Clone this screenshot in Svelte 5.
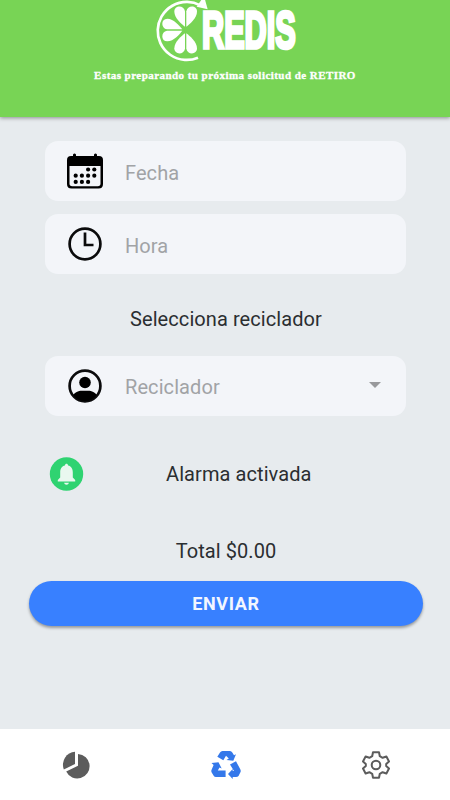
<script>
  let date = "";
  let time = "";
  let total = 0;

  // [column, row] of each day mark in the calendar icon
  const days = [[2, 0], [3, 0], [0, 1], [1, 1], [2, 1], [3, 1], [0, 2], [1, 2], [2, 2]];
  const petals = [0, -90, 180];
</script>

<div class="page">
  <header>
    <svg class="logo" viewBox="0 0 510 186" role="img" aria-label="Redis">
      <path class="ring" d="M174 173 A87 87 0 1 1 181 16" />
      <path d="M170 20 L203 28 L192 -12 Z" />
      {#each petals as angle}
        <g transform={`rotate(${angle} 137 90)`}>
          <path d="M135 80 C126 73 103 54 103 35 C103 15 132 15 135 34 Z" />
          <path d="M139 80 C148 73 171 54 171 35 C171 15 142 15 139 34 Z" />
        </g>
      {/each}
      <text x="186" y="145" textLength="281" lengthAdjust="spacingAndGlyphs">REDIS</text>
    </svg>
    <p>Estas preparando tu próxima solicitud de RETIRO</p>
  </header>

  <main>
    <label class="field">
      <svg viewBox="0 0 36 36">
        <path d="M4 3 H6 V1.5 Q7.5 -.5 9 1.5 V3 H27 V1.5 Q28.5 -.5 30 1.5 V3 H32 Q36 3 36 7 V31 Q36 35.5 31.5 35.5 H4.5 Q0 35.5 0 31 V7 Q0 3 4 3 Z" />
        <path class="sheet" d="M2.5 13 H33.5 V30.5 Q33.5 33.2 30.8 33.2 H5.2 Q2.5 33.2 2.5 30.5 Z" />
        {#each days as [col, row]}
          <circle cx={8.7 + col * 6.2} cy={16.5 + row * 6.2} r="2.1" />
        {/each}
      </svg>
      <input placeholder="Fecha" bind:value={date} />
    </label>

    <label class="field">
      <svg viewBox="0 0 36 36">
        <circle class="line" cx="18" cy="18" r="15.4" />
        <path class="line" d="M18 6.5 V19 H26.5" />
      </svg>
      <input placeholder="Hora" bind:value={time} />
    </label>

    <h2>Selecciona reciclador</h2>

    <div class="field select" role="button" tabindex="0">
      <svg viewBox="0 0 36 36">
        <circle class="line" cx="18" cy="18" r="15.4" />
        <circle cx="18" cy="14.5" r="5.8" />
        <path d="M6 27 C10 22.3 14 22.8 18 22.8 S26 22.3 30 27 C24 35 12 35 6 27 Z" />
      </svg>
      <span class="placeholder">Reciclador</span>
      <i class="caret"></i>
    </div>

    <div class="alarm">
      <svg viewBox="0 0 34 34">
        <circle cx="17" cy="17" r="16.7" />
        <path d="M8.3 24.5 V23 L10.7 20.5 V15.5 C10.7 11.3 12.5 9.2 15.4 8.4 C15.6 6.3 18.4 6.3 18.6 8.4 C21.5 9.2 23.3 11.3 23.3 15.5 V20.5 L25.7 23 V24.5 Z M14.6 25.7 H19.4 C19 28.3 15 28.3 14.6 25.7 Z" />
      </svg>
      <span>Alarma activada</span>
    </div>

    <p class="total">Total ${total.toFixed(2)}</p>
    <button class="send">ENVIAR</button>
  </main>

  <nav>
    <a href="#stats" aria-label="Stats">
      <svg viewBox="0 0 28 28">
        <path d="M13 .8 V13 L1.8 18.4 A13 13 0 0 1 13 .8 Z" />
        <path d="M16 2.9 A12.3 12.3 0 1 1 4.2 20.5 L16 14.8 Z" />
      </svg>
    </a>
    <a class="active" href="#recycle" aria-label="Recycle">
      <svg class="recycle" viewBox="0 0 30 28">
        <path d="M11.5 0 H19 Q20.5 0 21.3 1.5 L23 4.3 L25 3.2 L22.3 9.8 L15.5 9 L17.8 7.5 L15 4.8 L12.3 9.3 L6.3 5.8 L9 1.5 Q9.8 0 11.5 0 Z" />
        <path d="M25 10.3 L29.3 18.2 Q30.2 20 29.3 21.5 L27.5 25 Q26.7 26 25 26 H21.7 V28 L17 23 L21.7 18 V20 H23 L19 13.4 Z" />
        <path d="M.5 12 L7.5 11.3 L10.7 17.5 L8.5 16.5 L6.8 19.5 H14.6 V26 H5 Q3.4 26 2.5 24.5 L.7 21.5 Q-.1 20 .7 18.5 L2.6 14 Z" />
      </svg>
    </a>
    <a href="#settings" aria-label="Settings">
      <svg class="gear" viewBox="0 0 28 28">
        <path d="M11 1.3 H17 L17.8 5.2 L20.6 6.8 L24.4 5.5 L27 10.5 L24.2 13 V15 L27 17.5 L24.4 22.5 L20.6 21.2 L17.8 22.8 L17 26.7 H11 L10.2 22.8 L7.4 21.2 L3.6 22.5 L1 17.5 L3.8 15 V13 L1 10.5 L3.6 5.5 L7.4 6.8 L10.2 5.2 Z" />
        <circle cx="14" cy="14" r="4.3" />
      </svg>
    </a>
  </nav>
</div>

<style>
  :global(body) {
    background: #e7ebee;
  }

  .page {
    display: flex;
    flex-direction: column;
    height: 800px;
    font-family: Roboto, "Liberation Sans", sans-serif;
    font-size: 20px;
    letter-spacing: 0.08px;
    color: #2b2e31;
    background: #e7ebee;
  }

  header {
    display: flex;
    flex-direction: column;
    align-items: center;
    flex: none;
    height: 117px;
    background: #78d455;
    box-shadow: 0 1px 4px rgba(0, 0, 0, 0.4);
  }

  .logo {
    width: 170px;
    height: 62px;
    overflow: visible;
    fill: #fff;
  }

  .ring {
    fill: none;
    stroke: #fff;
    stroke-width: 8;
  }

  .logo text {
    font-family: "Liberation Sans", sans-serif;
    font-size: 154px;
    font-weight: 700;
    letter-spacing: 0;
    stroke: #fff;
    stroke-width: 11;
  }

  header p {
    margin: 5px 0 0;
    font: 700 11px/16px "Liberation Serif", serif;
    letter-spacing: 0.45px;
    color: #fff;
    white-space: nowrap;
    -webkit-text-stroke: 0.3px #fff;
  }

  main {
    display: flex;
    flex-direction: column;
    flex: 1;
    padding: 24px 27px 0 29px;
  }

  .field {
    display: flex;
    align-items: center;
    height: 60px;
    margin: 0 17px 13px 16px;
    padding: 0 24px 0 22px;
    border-radius: 13px;
    box-sizing: border-box;
    background: #f3f5f9;
  }

  .field svg {
    flex: none;
    width: 36px;
    height: 36px;
    margin-right: 22px;
  }

  .sheet {
    fill: #f3f5f9;
  }

  .line {
    fill: none;
    stroke: #0b0b0c;
    stroke-width: 2.7;
  }

  input {
    flex: 1;
    min-width: 0;
    padding: 3px 0 0;
    border: 0;
    outline: 0;
    background: none;
    font: inherit;
    letter-spacing: inherit;
  }

  input::placeholder,
  .placeholder {
    color: #a1a3a6;
    opacity: 1;
  }

  .placeholder {
    flex: 1;
    padding-top: 2px;
  }

  .caret {
    margin: 0 1px 2px 0;
    border: 6.5px solid transparent;
    border-top-color: #98999c;
    border-bottom: 0;
  }

  h2 {
    margin: 19px 0 24px;
    font-size: 20px;
    font-weight: 400;
    line-height: 26px;
    text-align: center;
  }

  .alarm {
    display: flex;
    align-items: center;
    height: 34px;
    margin-top: 28px;
    padding-left: 20px;
  }

  .alarm svg {
    width: 35px;
    height: 34px;
    margin-right: 82px;
  }

  .alarm circle {
    fill: #2fd371;
  }

  .alarm path {
    fill: #e9f8ef;
  }

  .total {
    margin: 48px 0 18px;
    line-height: 24px;
    text-align: center;
  }

  .send {
    height: 45px;
    padding: 0;
    border: 0;
    border-radius: 23px;
    background: #3880ff;
    box-shadow: 0 2px 3px rgba(0, 0, 0, 0.35);
    color: #f2f6ff;
    font: 700 18px Roboto, sans-serif;
    letter-spacing: 0.65px;
  }

  nav {
    display: grid;
    grid-template-columns: repeat(3, 150px);
    flex: none;
    height: 71px;
    padding-left: 1px;
    overflow: hidden;
    background: #fff;
  }

  nav a {
    display: flex;
    align-items: center;
    justify-content: center;
    color: #5c5c5c;
  }

  nav svg {
    width: 28px;
    height: 28px;
    fill: currentColor;
  }

  nav .active {
    color: #3478ea;
  }

  nav .recycle {
    width: 30px;
  }

  nav .gear {
    fill: none;
    stroke: currentColor;
    stroke-width: 2;
    stroke-linejoin: round;
  }
</style>
